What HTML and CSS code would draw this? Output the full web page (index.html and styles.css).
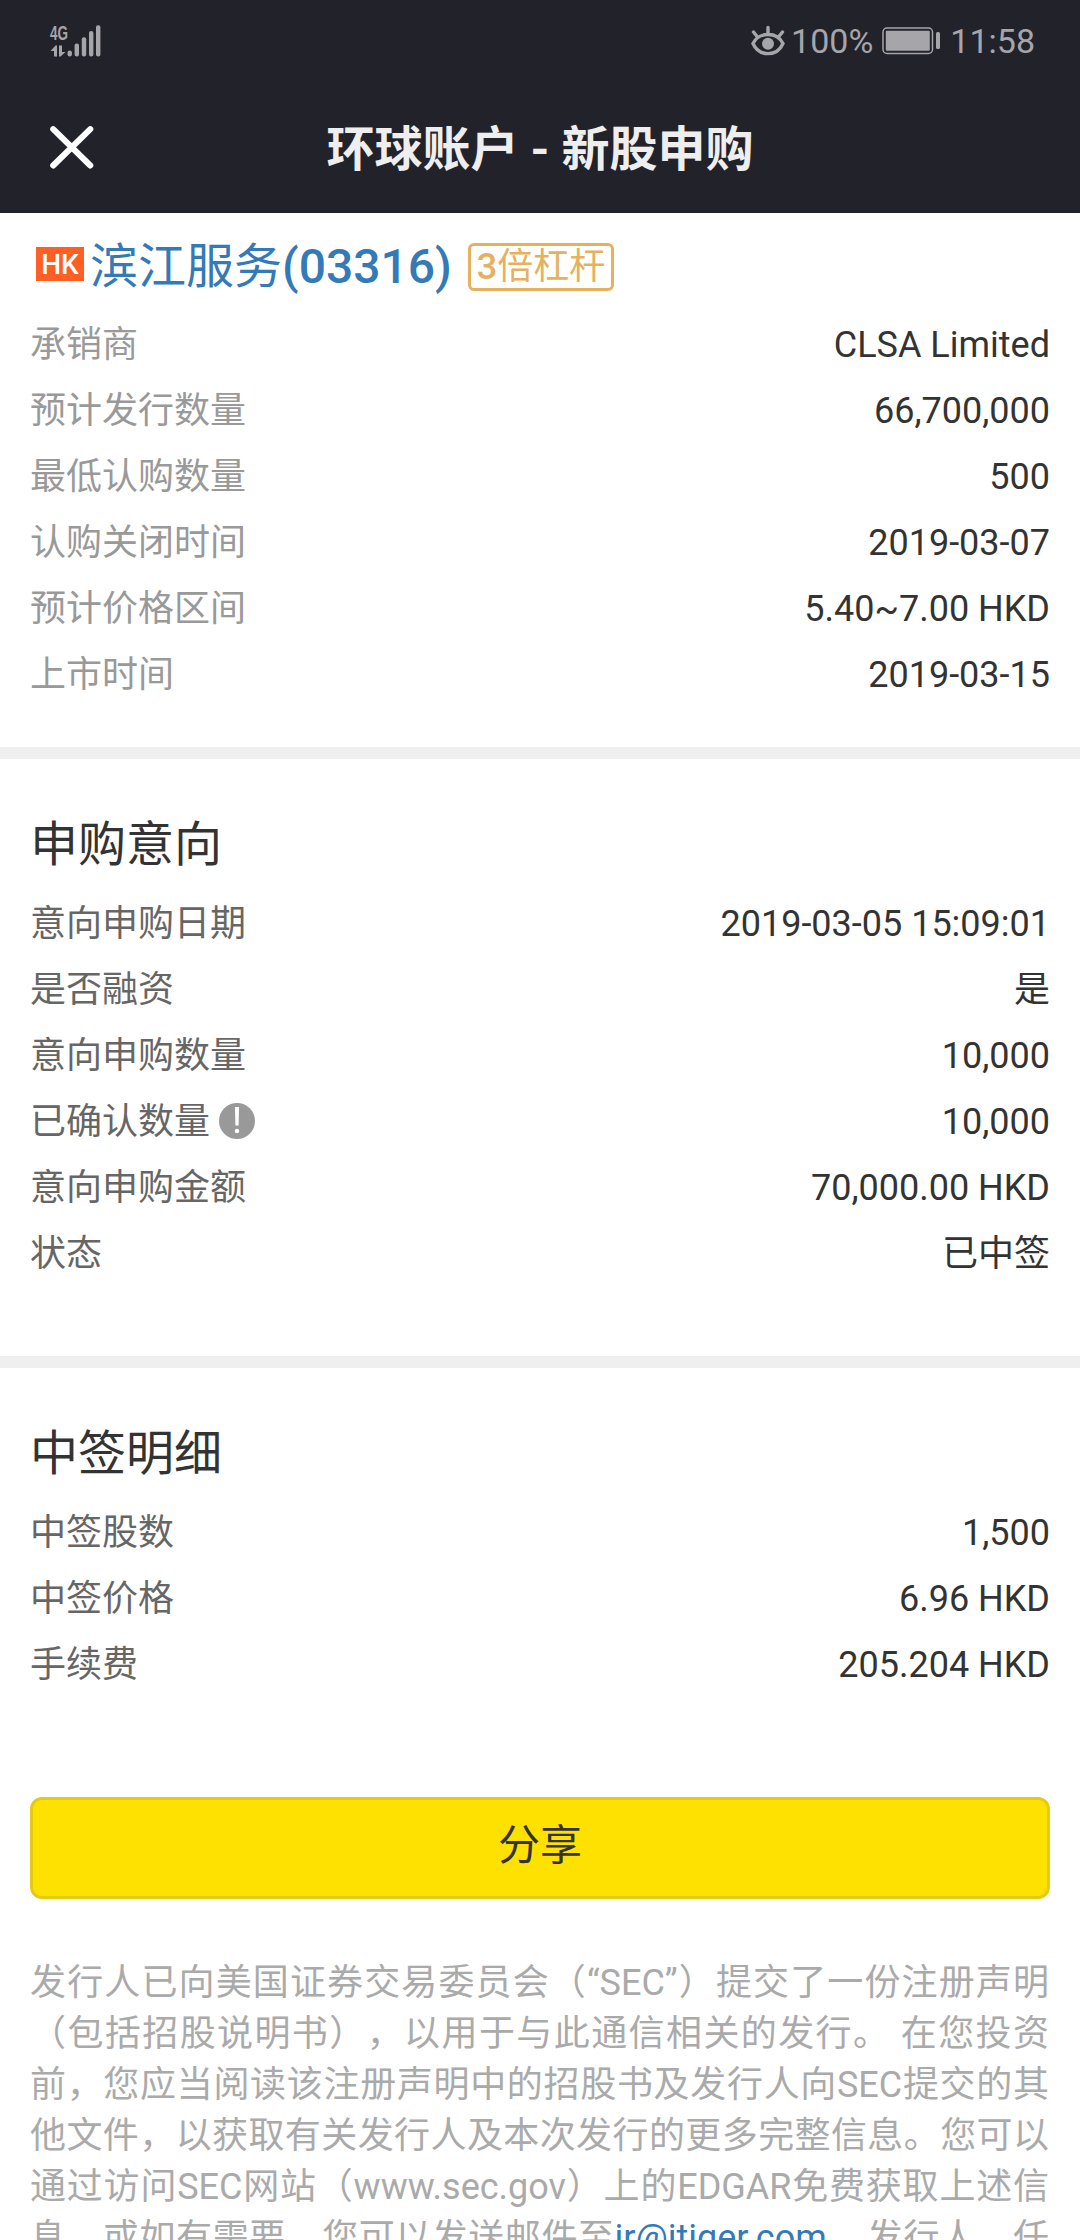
FILE: index.html
```html
<!DOCTYPE html>
<html lang="zh-CN">
<head>
  <meta charset="UTF-8">
  <title>环球账户 - 新股申购</title>
  <link rel="stylesheet" href="styles.css">
</head>
<body>
  <div class="status-bar">
    <svg class="signal" width="52" height="34" viewBox="0 0 52 34">
      <text x="0" y="15.6" textLength="18" lengthAdjust="spacingAndGlyphs">4G</text>
      <path d="M0.5 27L5.5 21.5H7V32.5H4V27ZM9 21.5H12V28H15.5L10.5 32.5H9Z"/>
      <rect x="17.5" y="26.5" width="4.4" height="6" rx="2.2"/>
      <rect x="24.6" y="19.5" width="4.4" height="13" rx="2"/>
      <rect x="31.8" y="13.3" width="4.4" height="19.2" rx="2"/>
      <rect x="39" y="7" width="4.4" height="25.5" rx="2"/>
      <rect x="46" y="1.3" width="4.4" height="31.2" rx="2"/>
    </svg>
    <div class="status-right">
      <svg class="eye" width="34" height="32" viewBox="0 0 34 32">
        <path d="M2 18.5C8 6.5 26 6.5 32 18.5C26 32 8 32 2 18.5Z"/>
        <path d="M17 2.5V9M2.5 7L6.5 12M31.5 7L27.5 12"/>
        <circle cx="17" cy="18.7" r="6"/>
      </svg>
      <span class="percent">100%</span>
      <svg class="battery" width="59" height="28" viewBox="0 0 59 28">
        <rect class="shell" x="1" y="1" width="49.5" height="25.5" rx="4"/>
        <rect x="3.8" y="3.8" width="44" height="20" rx="1"/>
        <rect x="54" y="5" width="4" height="17" rx="1.5"/>
      </svg>
      <span class="time">11:58</span>
    </div>
  </div>

  <div class="nav-bar">
    <svg class="close" width="44" height="44" viewBox="0 0 44 44">
      <path d="M3.2 3.2L40.3 39.5M40.3 3.2L3.2 39.5"/>
    </svg>
    <h1>环球账户 - 新股申购</h1>
  </div>

  <div class="section stock">
    <div class="stock-title">
      <span class="market">HK</span>
      <a class="stock-name">滨江服务<b>(03316)</b></a>
      <span class="lever"><b>3</b>倍杠杆</span>
    </div>
    <div class="row"><span>承销商</span><b>CLSA Limited</b></div>
    <div class="row"><span>预计发行数量</span><b>66,700,000</b></div>
    <div class="row"><span>最低认购数量</span><b>500</b></div>
    <div class="row"><span>认购关闭时间</span><b>2019-03-07</b></div>
    <div class="row"><span>预计价格区间</span><b>5.40~7.00 HKD</b></div>
    <div class="row"><span>上市时间</span><b>2019-03-15</b></div>
  </div>

  <div class="section intent">
    <h2>申购意向</h2>
    <div class="row"><span>意向申购日期</span><b>2019-03-05 15:09:01</b></div>
    <div class="row"><span>是否融资</span><b>是</b></div>
    <div class="row"><span>意向申购数量</span><b>10,000</b></div>
    <div class="row">
      <span>已确认数量
        <svg class="info" width="36" height="36" viewBox="0 0 36 36">
          <circle cx="18" cy="18" r="18"/>
          <path d="M16 4H20L19.6 22.5H16.4Z"/>
          <circle class="dot" cx="18" cy="28" r="2.2"/>
        </svg>
      </span>
      <b>10,000</b>
    </div>
    <div class="row"><span>意向申购金额</span><b>70,000.00 HKD</b></div>
    <div class="row"><span>状态</span><b>已中签</b></div>
  </div>

  <div class="section result">
    <h2>中签明细</h2>
    <div class="row"><span>中签股数</span><b>1,500</b></div>
    <div class="row"><span>中签价格</span><b>6.96 HKD</b></div>
    <div class="row"><span>手续费</span><b>205.204 HKD</b></div>
    <button class="share">分享</button>
    <p class="notice">发行人已向美国证券交易委员会（“SEC”）提交了一份注册声明（包括招股说明书），以用于与此通信相关的发行。 在您投资前，您应当阅读该注册声明中的招股书及发行人向SEC提交的其他文件，以获取有关发行人及本次发行的更多完整信息。您可以通过访问SEC网站（www.sec.gov）上的EDGAR免费获取上述信息，或如有需要，您可以发送邮件至<a>ir@itiger.com</a>。发行人、任</p>
  </div>
</body>
</html>
```
FILE: styles.css
```css
* {
  box-sizing: border-box;
}

body {
  margin: 0;
  height: 2240px;
  overflow: hidden;
  background: #fff;
  color: #333;
  font-family: Roboto, "Noto Sans CJK SC", sans-serif;
  font-size: 36px;
  text-spacing-trim: space-all;
}

svg {
  display: block;
  flex: none;
}

.status-bar {
  height: 81px;
  padding: 0 45px 0 50px;
  display: flex;
  justify-content: space-between;
  align-items: center;
  background: #22222b;
  color: #a5a5aa;
  font-size: 34px;
}

.signal {
  overflow: visible;
  fill: #a5a5aa;
}

.signal text {
  font: bold 21px "Liberation Sans", sans-serif;
}

.status-right {
  display: flex;
  align-items: center;
}

.eye {
  fill: none;
  stroke: #a5a5aa;
  stroke-width: 3.4;
  stroke-linecap: round;
}

.eye circle {
  fill: #a5a5aa;
  stroke: none;
}

.percent {
  margin: 0 9px 0 6px;
}

.battery {
  margin-right: 9px;
  fill: #a5a5aa;
}

.battery .shell {
  fill: none;
  stroke: #a5a5aa;
  stroke-width: 1.5;
}

.nav-bar {
  height: 132px;
  padding: 2px 50px 0;
  display: flex;
  align-items: center;
  background: #22222b;
}

.close {
  fill: none;
  stroke: #fff;
  stroke-width: 6;
  stroke-linecap: round;
}

.nav-bar h1 {
  flex: 1;
  margin: 0 44px 0 0;
  padding-top: 3px;
  font-size: 48px;
  line-height: 72px;
  text-align: center;
  color: #eee;
}

.section {
  padding: 0 30px;
}

.stock {
  height: 534px;
}

.stock-title {
  height: 98px;
  padding: 9px 0 0 6px;
  display: flex;
  align-items: center;
}

.market {
  width: 48px;
  height: 34px;
  margin: 0 6px 5px 0;
  background: #ff5f25;
  color: #fff;
  font-size: 28px;
  font-weight: 500;
  line-height: 35px;
  text-align: center;
}

.stock-name {
  color: #337ab7;
  font-size: 48px;
  line-height: 70px;
}

.stock-title b {
  font-weight: 500;
}

.lever {
  height: 48px;
  margin-left: 16px;
  padding: 0 6px;
  border: 3px solid #e6b15e;
  border-radius: 6px;
  color: #e6b15e;
  line-height: 43px;
}

.row {
  height: 66px;
  padding-top: 1px;
  display: flex;
  justify-content: space-between;
  line-height: 66px;
}

.row span {
  display: flex;
  color: #666;
}

.row b {
  font-weight: 400;
}

.stock .row span {
  color: #999;
}

.intent {
  height: 609px;
  border-top: 12px solid #efefef;
}

.result {
  border-top: 12px solid #efefef;
}

h2 {
  height: 131px;
  margin: 0;
  padding-top: 50px;
  font-size: 48px;
  font-weight: 400;
  line-height: 72px;
}

.info {
  margin: 14px 0 0 9px;
  fill: #999;
}

.info path,
.info .dot {
  fill: #fff;
}

.share {
  display: block;
  width: 100%;
  height: 102px;
  margin: 100px 0 59px;
  padding: 0 0 4px;
  border: 3px solid #e4cb13;
  border-radius: 12px;
  background: #ffe100;
  color: #333;
  font-family: inherit;
  font-size: 42px;
  line-height: 92px;
}

.notice {
  margin: 0 1px 0 0;
  color: #aaa;
  line-height: 51px;
  text-align: justify;
  text-align-last: justify;
}

.notice a {
  margin-right: 3px;
  color: #337ab7;
}
```
